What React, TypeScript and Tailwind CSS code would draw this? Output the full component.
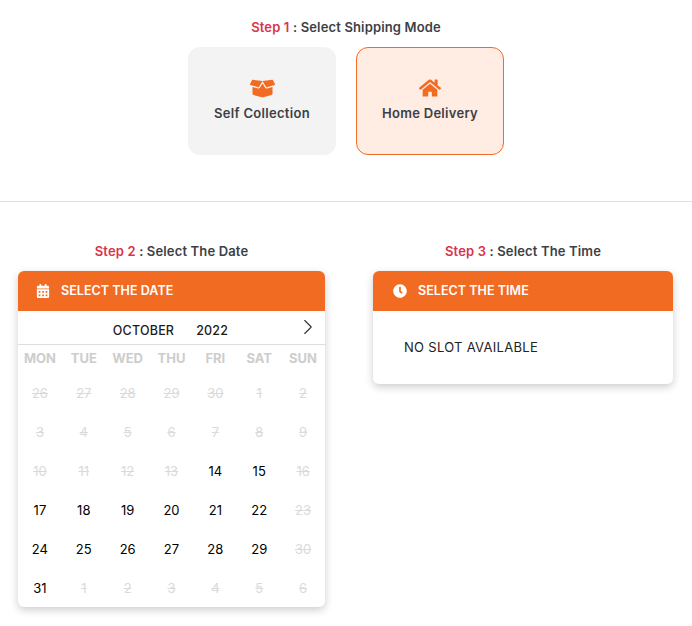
import { FaBoxOpen, FaCalendarAlt, FaClock, FaHome } from "react-icons/fa";
import { ChevronRight } from "lucide-react";

const weekdays = ["MON", "TUE", "WED", "THU", "FRI", "SAT", "SUN"];

const days = [
  ["26", "27", "28", "29", "30", "1", "2"],
  ["3", "4", "5", "6", "7", "8", "9"],
  ["10", "11", "12", "13", "14", "15", "16"],
  ["17", "18", "19", "20", "21", "22", "23"],
  ["24", "25", "26", "27", "28", "29", "30"],
  ["31", "1", "2", "3", "4", "5", "6"],
];

const openDays = ["14", "15", "17", "18", "19", "20", "21", "22", "24", "25", "26", "27", "28", "29", "31"];

function StepTitle({ step, text }: { step: string; text: string }) {
  return (
    <h2 className="text-center text-[13px] leading-5 font-semibold tracking-[0.15px] text-[#3d3f47]">
      <span className="text-[#d8344a]">{step}</span> : {text}
    </h2>
  );
}

function PanelHeader({ icon, title, className }: { icon: React.ReactNode; title: string; className: string }) {
  return (
    <div className={`flex h-10 items-center rounded-t-md bg-[#f26b23] text-white ${className}`}>
      {icon}
      <span className="text-[12.5px] font-semibold tracking-[0.05px]">{title}</span>
    </div>
  );
}

export default function App() {
  return (
    <div className="h-[626px] w-[692px] overflow-hidden bg-white font-['Inter',sans-serif]">
      <section className="flex h-[201px] flex-col items-center pt-[17px]">
        <StepTitle step="Step 1" text="Select Shipping Mode" />
        <div className="mt-[10px] flex gap-5">
          <div className="flex h-[108px] w-[148px] flex-col items-center rounded-xl bg-[#f3f3f3] pt-[29px]">
            <FaBoxOpen className="text-[25px] text-[#f26b23]" />
            <span className="mt-[2px] text-[13px] leading-5 font-semibold tracking-[0.3px] text-[#3d3f47]">Self Collection</span>
          </div>
          <div className="flex h-[108px] w-[148px] flex-col items-center rounded-xl border border-[#f26b23] bg-[#ffece2] pt-[29px]">
            <FaHome className="text-[22px] text-[#f26b23]" />
            <span className="mt-[4px] text-[13px] leading-5 font-semibold tracking-[0.3px] text-[#3d3f47]">Home Delivery</span>
          </div>
        </div>
      </section>

      <div className="border-t border-[#e2e2e2] pt-[39px] pr-[19px] pl-[18px]">
        <div className="flex items-start gap-12">
          <div className="w-[307px]">
            <StepTitle step="Step 2" text="Select The Date" />
            <div className="mt-[10px] flex flex-col rounded-md bg-white shadow-[0_3px_9px_rgba(0,0,0,0.2)]">
              <PanelHeader
                icon={<FaCalendarAlt className="mr-[11px] text-[14px]" />}
                title="SELECT THE DATE"
                className="pl-[18px]"
              />
              <div className="relative flex h-[34px] items-center justify-center gap-[22px] border-b border-[#dedede] pt-[8px] pr-[2px] text-[12.5px] font-medium tracking-[0.2px] text-[#1c1c1c]">
                <span>OCTOBER</span>
                <span>2022</span>
                <ChevronRight className="absolute top-[3px] right-[4px] h-[26px] w-[26px] text-[#333]" strokeWidth={1} />
              </div>
              <div className="grid grid-cols-7 pt-[3px]">
                {weekdays.map((name) => (
                  <span key={name} className="text-center text-[13px] leading-5 font-bold text-[#cdcdcd]">
                    {name}
                  </span>
                ))}
              </div>
              <div className="-mb-px grid grid-cols-7 pt-[6px]">
                {days.flatMap((week, row) =>
                  week.map((day) => {
                    const open = openDays.includes(day) && (row === 2 || row === 3 || row === 4 || day === "31");
                    return (
                      <span
                        key={`${row}-${day}`}
                        className={`flex h-[39px] items-center justify-center text-[13px] ${
                          open ? "text-black" : "text-[#dadada] line-through"
                        }`}
                      >
                        {day}
                      </span>
                    );
                  })
                )}
              </div>
            </div>
          </div>

          <div className="w-[300px]">
            <StepTitle step="Step 3" text="Select The Time" />
            <div className="mt-[10px] rounded-md bg-white shadow-[0_3px_9px_rgba(0,0,0,0.2)]">
              <PanelHeader
                icon={<FaClock className="mr-[11px] text-[14px]" />}
                title="SELECT THE TIME"
                className="pl-[20px]"
              />
              <div className="h-[73px] pt-[26px] pl-[31px] text-[13px] leading-5 tracking-[0.3px] text-[#222]">
                NO SLOT AVAILABLE
              </div>
            </div>
          </div>
        </div>
      </div>
    </div>
  );
}
